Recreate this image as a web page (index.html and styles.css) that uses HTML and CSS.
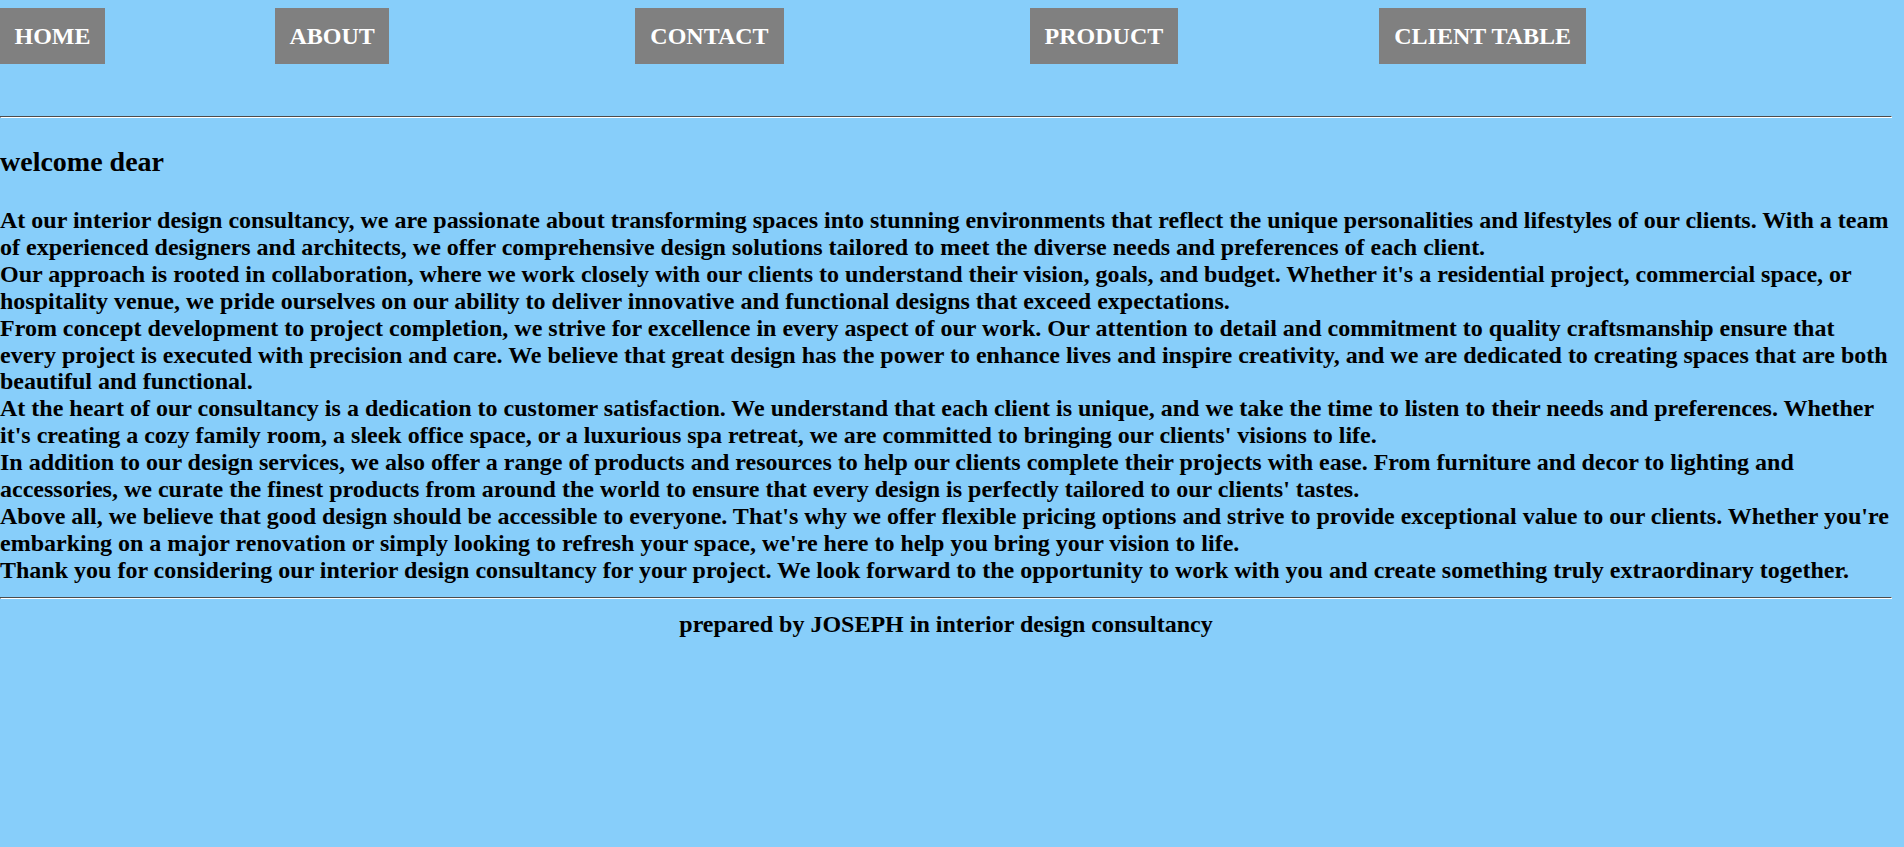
FILE: index.html
```html
<!DOCTYPE html>
<html>
<head>
<meta charset="utf-8">
<title>Interior Design Consultancy</title>
<link rel="stylesheet" href="styles.css">
</head>
<body>
<div class="page">
  <nav class="nav">
    <a class="nav-item nav-home" href="#">HOME</a>
    <a class="nav-item nav-about" href="#">ABOUT</a>
    <a class="nav-item nav-contact" href="#">CONTACT</a>
    <a class="nav-item nav-product" href="#">PRODUCT</a>
    <a class="nav-item nav-client" href="#">CLIENT TABLE</a>
  </nav>
  <hr class="rule rule-top">
  <h3 class="welcome">welcome dear</h3>
  <p class="intro">At our interior design consultancy, we are passionate about transforming spaces into stunning environments that reflect the unique personalities and lifestyles of our clients. With a team of experienced designers and architects, we offer comprehensive design solutions tailored to meet the diverse needs and preferences of each client.<br>Our approach is rooted in collaboration, where we work closely with our clients to understand their vision, goals, and budget. Whether it's a residential project, commercial space, or hospitality venue, we pride ourselves on our ability to deliver innovative and functional designs that exceed expectations.<br>From concept development to project completion, we strive for excellence in every aspect of our work. Our attention to detail and commitment to quality craftsmanship ensure that every project is executed with precision and care. We believe that great design has the power to enhance lives and inspire creativity, and we are dedicated to creating spaces that are both beautiful and functional.<br>At the heart of our consultancy is a dedication to customer satisfaction. We understand that each client is unique, and we take the time to listen to their needs and preferences. Whether it's creating a cozy family room, a sleek office space, or a luxurious spa retreat, we are committed to bringing our clients' visions to life.<br>In addition to our design services, we also offer a range of products and resources to help our clients complete their projects with ease. From furniture and decor to lighting and accessories, we curate the finest products from around the world to ensure that every design is perfectly tailored to our clients' tastes.<br>Above all, we believe that good design should be accessible to everyone. That's why we offer flexible pricing options and strive to provide exceptional value to our clients. Whether you're embarking on a major renovation or simply looking to refresh your space, we're here to help you bring your vision to life.<br>Thank you for considering our interior design consultancy for your project. We look forward to the opportunity to work with you and create something truly extraordinary together.</p>
  <hr class="rule rule-bottom">
  <footer class="footer">prepared by JOSEPH in interior design consultancy</footer>
</div>
</body>
</html>
```
FILE: styles.css
```css
html, body {
  margin: 0;
  padding: 0;
}
body {
  background: #87cefa;
  font-family: "Liberation Serif", "Times New Roman", serif;
  font-weight: bold;
  font-size: 24px;
  color: #000;
}
.page {
  width: 1892px;
}
.nav {
  display: flex;
  margin-top: 8px;
}
.nav-item {
  display: block;
  background: #808080;
  color: #fff;
  text-decoration: none;
  font-size: 24px;
  line-height: 28px;
  padding: 14px 14.5px;
}
.nav-home { margin-right: 170px; }
.nav-about { margin-right: 246px; }
.nav-contact { margin-right: 246px; padding: 14px 15px; }
.nav-product { margin-right: 201px; padding: 14px 15px; }
.nav-client { padding: 14px 15px; }
.rule {
  display: block;
  height: 0;
  border-style: inset;
  border-width: 1px;
  border-color: #a0a0a0 #fff #fff #a0a0a0;
  margin: 0;
}
.rule-top { margin-top: 52px; }
.welcome {
  font-size: 28px;
  line-height: 32px;
  margin: 28px 0 0;
}
.intro {
  font-size: 24px;
  line-height: 26.9px;
  margin: 29px 0 0;
}
.rule-bottom { margin-top: 13px; }
.footer {
  text-align: center;
  font-size: 24px;
  line-height: 28px;
  margin-top: 11px;
}
```
